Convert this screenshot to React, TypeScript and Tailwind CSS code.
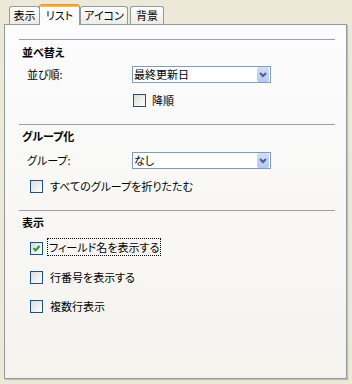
import React from "react";

const font = { fontFamily: '"Noto Sans CJK JP", "Noto Sans", sans-serif' };

function Tab({ label, w, selected, className = "" }: { label: string; w: string; selected?: boolean; className?: string }) {
  if (selected) {
    return (
      <div className={`relative z-10 -mb-px flex h-[21px] flex-col overflow-hidden rounded-t-[3px] border-x border-[#919b9c] bg-[#fcfcfe] ${w} ${className}`}>
        <div className="h-[3px] w-full bg-gradient-to-b from-[#e68b2c] to-[#ffc83c]" />
        <div className="flex flex-1 items-center justify-center pb-[2px] text-[11px] leading-none text-black">{label}</div>
      </div>
    );
  }
  return (
    <div className={`flex h-[18px] items-center justify-center rounded-t-[3px] border border-b-0 border-[#919b9c] bg-gradient-to-b from-[#ffffff] to-[#ecebe6] text-[11px] leading-none text-black ${w} ${className}`}>
      {label}
    </div>
  );
}

function Checkbox({ checked }: { checked?: boolean }) {
  return (
    <div className="relative h-[13px] w-[13px] shrink-0 border border-[#1c5180] bg-gradient-to-br from-[#dcdcd7] to-[#ffffff]">
      {checked && (
        <svg width="11" height="11" viewBox="0 0 11 11" className="absolute left-0 top-0">
          <path d="M2.5 5 L4.5 7.5 L8.5 3" fill="none" stroke="#21a121" strokeWidth="2" />
        </svg>
      )}
    </div>
  );
}

function Select({ value }: { value: string }) {
  return (
    <div className="flex h-[17px] w-[139px] items-center border border-[#7f9db9] bg-white pl-[1px] pr-[1px]">
      <div className="flex-1 text-[11px] leading-none text-black">{value}</div>
      <div className="flex h-[15px] w-[12px] items-center justify-center rounded-[2px] bg-gradient-to-b from-[#d2defc] to-[#b3c8f5]">
        <svg width="8" height="6" viewBox="0 0 8 6">
          <path d="M1 1 L4 4 L7 1" fill="none" stroke="#4d6185" strokeWidth="2" />
        </svg>
      </div>
    </div>
  );
}

function Heading({ text, className = "" }: { text: string; className?: string }) {
  return <div className={`ml-[3px] h-[14px] text-[11px] font-bold leading-[14px] text-black ${className}`}>{text}</div>;
}

function Line({ className = "" }: { className?: string }) {
  return <div className={`h-px w-full bg-[#a0a0a0] ${className}`} />;
}

export default function App() {
  return (
    <div className="h-[384px] w-[352px] overflow-hidden bg-[#ece9d8] px-[4px] pt-[4px] [font-feature-settings:'palt']" style={font}>
      <div className="flex h-[20px] items-end">
        <Tab label="表示" w="w-[31px]" className="ml-[5px]" />
        <Tab label="リスト" w="w-[41px]" selected className="-ml-px" />
        <Tab label="アイコン" w="w-[48px]" />
        <Tab label="背景" w="w-[34px]" className="ml-[2px]" />
      </div>
      <div className="h-[355px] w-[343px] border border-[#919b9c] bg-gradient-to-b from-[#fcfcfe] to-[#f4f3ee] pl-[14px] pr-[11px] pt-[14px] shadow-[1px_1px_0_#c5c2b2,2px_2px_0_#e3e0d0]">
        <Line />
        <Heading text="並べ替え" className="mt-[5px]" />
        <div className="mt-[7px] flex items-center">
          <div className="ml-[8px] w-[105px] text-[11px] leading-none text-black">並び順:</div>
          <Select value="最終更新日" />
        </div>
        <div className="ml-[114px] mt-[11px] flex items-center gap-[6px]">
          <Checkbox />
          <span className="text-[11px] leading-none text-black">降順</span>
        </div>

        <Line className="mt-[17px]" />
        <Heading text="グループ化" className="mt-[4px]" />
        <div className="mt-[9px] flex items-center">
          <div className="ml-[8px] w-[105px] text-[11px] leading-none text-black">グループ:</div>
          <Select value="なし" />
        </div>
        <div className="ml-[11px] mt-[11px] flex items-center gap-[7px]">
          <Checkbox />
          <span className="text-[11px] leading-none text-black">すべてのグループを折りたたむ</span>
        </div>

        <Line className="mt-[17px]" />
        <Heading text="表示" className="mt-[4px]" />
        <div className="ml-[11px] mt-[13px] flex items-start">
          <Checkbox checked />
          <div className="-mt-[4px] ml-[4px] flex h-[18px] items-center border border-dotted border-black px-[1px] text-[11px] leading-none text-black">
            フィールド名を表示する
          </div>
        </div>
        <div className="ml-[11px] mt-[15px] flex items-center gap-[7px]">
          <Checkbox />
          <span className="text-[11px] leading-none text-black">行番号を表示する</span>
        </div>
        <div className="ml-[11px] mt-[16px] flex items-center gap-[7px]">
          <Checkbox />
          <span className="text-[11px] leading-none text-black">複数行表示</span>
        </div>
      </div>
    </div>
  );
}
